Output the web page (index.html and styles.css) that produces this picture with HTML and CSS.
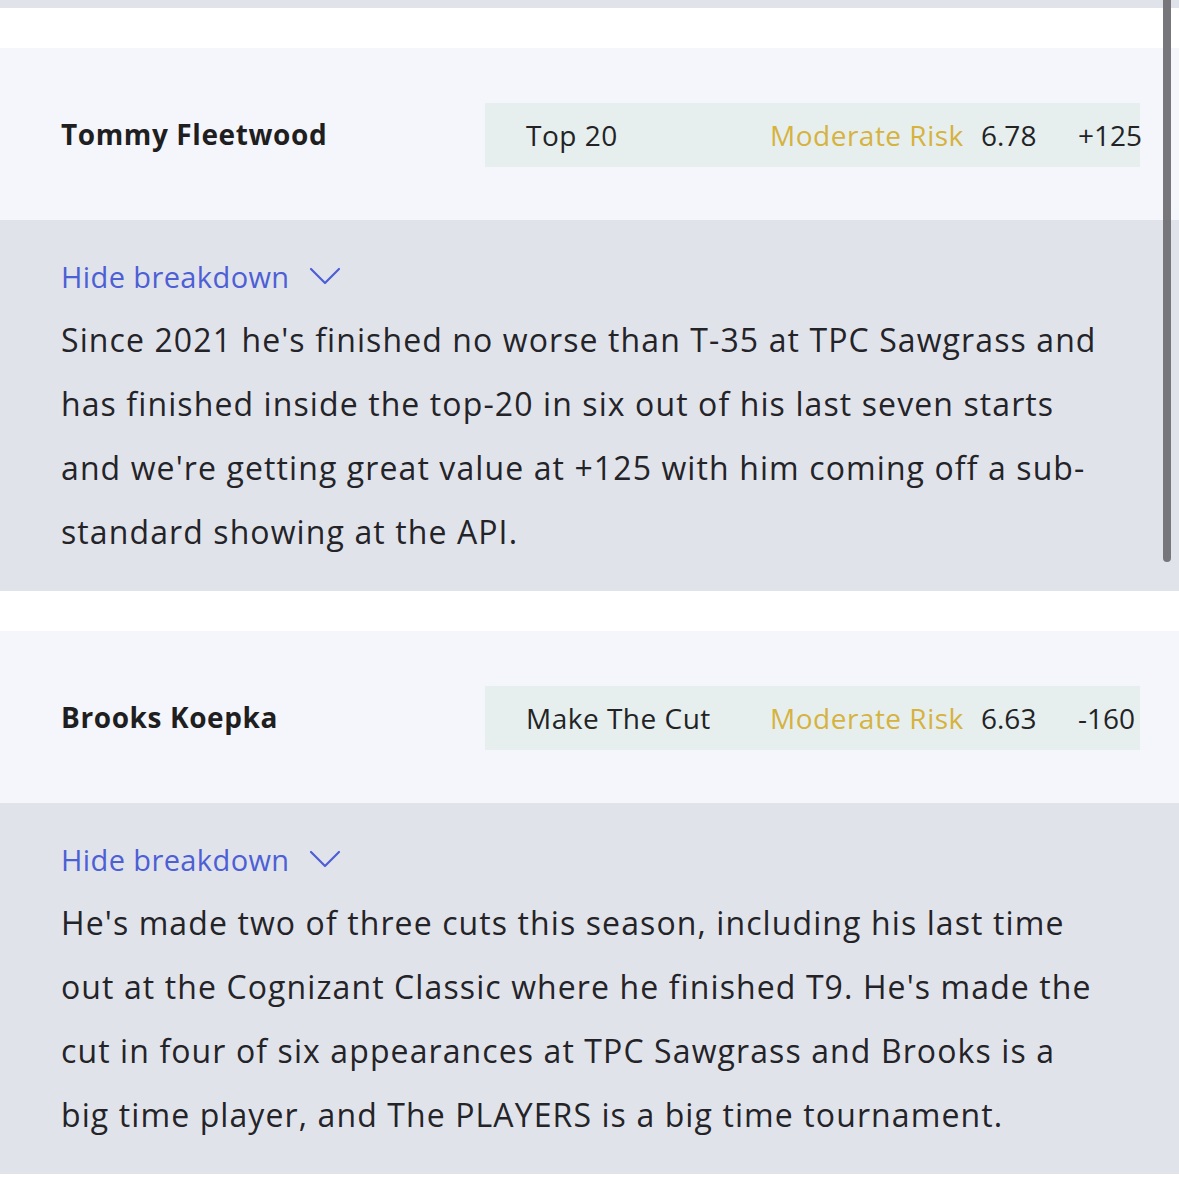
FILE: index.html
```html
<!DOCTYPE html>
<html>
<head>
<meta charset="utf-8">
<link rel="stylesheet" href="styles.css">
</head>
<body>
<div class="topbar"></div>
<div class="list">
  <section class="card">
    <div class="card-head">
      <div class="name">Tommy Fleetwood</div>
      <div class="pill">
        <span class="market">Top 20</span>
        <span class="risk">Moderate Risk</span>
        <span class="score">6.78</span>
        <span class="odds">+125</span>
      </div>
    </div>
    <div class="breakdown">
      <div class="toggle">Hide breakdown
        <svg class="chev" width="32" height="20" viewBox="0 0 32 20"><polyline points="2,3 16,17 30,3" fill="none" stroke="currentColor" stroke-width="2.2" stroke-linecap="round" stroke-linejoin="round"/></svg>
      </div>
      <p class="text">Since 2021 he's finished no worse than T-35 at TPC Sawgrass and<br>has finished inside the top-20 in six out of his last seven starts<br>and we're getting great value at +125 with him coming off a sub-<br>standard showing at the API.</p>
    </div>
  </section>
  <section class="card">
    <div class="card-head">
      <div class="name">Brooks Koepka</div>
      <div class="pill">
        <span class="market">Make The Cut</span>
        <span class="risk">Moderate Risk</span>
        <span class="score">6.63</span>
        <span class="odds">-160</span>
      </div>
    </div>
    <div class="breakdown">
      <div class="toggle">Hide breakdown
        <svg class="chev" width="32" height="20" viewBox="0 0 32 20"><polyline points="2,3 16,17 30,3" fill="none" stroke="currentColor" stroke-width="2.2" stroke-linecap="round" stroke-linejoin="round"/></svg>
      </div>
      <p class="text">He's made two of three cuts this season, including his last time<br>out at the Cognizant Classic where he finished T9. He's made the<br>cut in four of six appearances at TPC Sawgrass and Brooks is a<br>big time player, and The PLAYERS is a big time tournament.</p>
    </div>
  </section>
</div>
<div class="scrollbar"></div>
</body>
</html>
```
FILE: styles.css
```css
html, body {
  margin: 0;
  padding: 0;
  background: #ffffff;
}
body {
  font-family: "Open Sans", "Noto Sans", sans-serif;
  color: #222226;
  width: 1179px;
  height: 1200px;
  overflow: hidden;
  position: relative;
}
.topbar {
  height: 8px;
  background: #e1e3ea;
}
.list {
  display: flex;
  flex-direction: column;
  gap: 40px;
  padding-top: 40px;
}
.card-head {
  height: 172px;
  background: #f5f6fb;
  display: flex;
  align-items: center;
  justify-content: space-between;
  padding: 0 39px 0 61px;
}
.name {
  font-size: 28px;
  font-weight: 700;
  color: #1f1f22;
  letter-spacing: 0.6px;
}
.pill {
  width: 614px;
  height: 64px;
  margin-top: 2px;
  padding-left: 41px;
  background: #e6efee;
  display: grid;
  grid-template-columns: 244px 211px 97px 1fr;
  align-items: center;
  font-size: 28px;
  letter-spacing: 0.5px;
  color: #232326;
}
.score, .odds {
  letter-spacing: 0;
}
.risk {
  color: #d6b23e;
}
.breakdown {
  background: #e1e3eb;
  padding: 35px 61px 27px;
}
.toggle {
  color: #4d5fd5;
  font-size: 29px;
  letter-spacing: 0.4px;
  height: 44px;
  line-height: 44px;
  display: flex;
  align-items: center;
  gap: 19px;
}
.chev {
  display: block;
  margin-top: -2px;
}
.text {
  margin: 9px 0 0;
  font-size: 32px;
  letter-spacing: 1.1px;
  line-height: 64px;
  color: #242428;
}
.scrollbar {
  position: absolute;
  top: 0;
  left: 1163px;
  width: 8px;
  height: 562px;
  background: #76767b;
  border-radius: 0 0 4px 4px;
}
```
